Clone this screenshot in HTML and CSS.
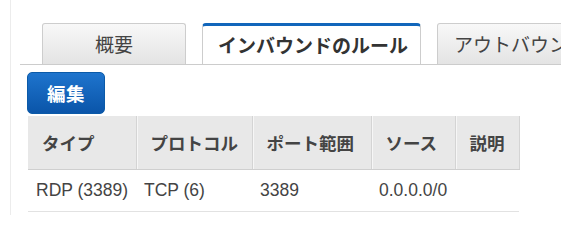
FILE: index.html
```html
<!DOCTYPE html>
<html lang="ja">
<head>
<meta charset="utf-8">
<link rel="stylesheet" href="styles.css">
</head>
<body>
<div class="frame">
  <div class="tabs">
    <div class="tab tab-first">概要</div>
    <div class="tab tab-active">インバウンドのルール</div>
    <div class="tab tab-last">アウトバウンドのルール</div>
  </div>
  <div class="toolbar">
    <button class="btn">編集</button>
  </div>
  <table class="rules">
    <colgroup>
      <col class="c1"><col class="c2"><col class="c3"><col class="c4"><col class="c5">
    </colgroup>
    <thead>
      <tr><th>タイプ</th><th>プロトコル</th><th>ポート範囲</th><th>ソース</th><th>説明</th></tr>
    </thead>
    <tbody>
      <tr><td>RDP (3389)</td><td>TCP (6)</td><td>3389</td><td>0.0.0.0/0</td><td></td></tr>
    </tbody>
  </table>
</div>
</body>
</html>
```

FILE: styles.css
```css
html, body {
  margin: 0;
  padding: 0;
  background: #fff;
}
body {
  font-family: "Liberation Sans", "Noto Sans CJK JP", sans-serif;
  color: #444;
  width: 561px;
  height: 215px;
  overflow: hidden;
}
.frame {
  margin-left: 10px;
  border-left: 1px solid #ececec;
  height: 215px;
  padding-top: 23px;
  box-sizing: border-box;
}
.tabs {
  display: flex;
  gap: 16px;
  margin-left: 9px;
  padding-left: 22px;
  border-bottom: 1px solid #cccccc;
  height: 41px;
  white-space: nowrap;
  overflow: hidden;
}
.tab {
  box-sizing: border-box;
  height: 41px;
  border: 1px solid #cdcdcd;
  border-bottom: none;
  border-radius: 3px 3px 0 0;
  background: linear-gradient(#f8f8f8, #e4e4e4);
  font-family: "Noto Sans CJK JP", sans-serif;
  font-size: 19px;
  line-height: 39px;
  color: #444;
  padding: 0 16px;
  flex: none;
}
.tab-first {
  width: 144px;
  text-align: center;
}
.tab-active {
  width: 219px;
  background: #fff;
  border-top: 3px solid #1166bb;
  line-height: 37px;
  font-weight: bold;
  color: #333;
  height: 42px;
  border-radius: 4px 4px 0 0;
  padding: 0 0 0 15px;
}
.tab-last {
  padding-left: 16px;
}
.toolbar {
  padding: 7px 0 0 16px;
}
.btn {
  display: block;
  width: 78px;
  height: 42px;
  border: 1px solid #0b5aa8;
  border-radius: 5px;
  background: linear-gradient(#1e74cd, #0a55a9);
  color: #fff;
  font-family: "Noto Sans CJK JP", sans-serif;
  font-weight: bold;
  font-size: 18.5px;
  line-height: 38px;
  padding: 0;
  letter-spacing: 0.5px;
}
.rules {
  margin: 2px 0 0 17px;
  border-collapse: collapse;
  table-layout: fixed;
  width: 491px;
}
.c1 { width: 108px; }
.c2 { width: 116px; }
.c3 { width: 119px; }
.c4 { width: 84px; }
.c5 { width: 64px; }
.rules th {
  background: #e8e8e8;
  height: 53px;
  padding: 0 0 0 14px;
  text-align: left;
  font-family: "Noto Sans CJK JP", sans-serif;
  font-size: 17.5px;
  font-weight: bold;
  color: #444;
  border-bottom: 1px solid #cfcfcf;
  border-right: 1px solid #d4d4d4;
  box-shadow: inset 1px 0 0 #f6f6f6;
  white-space: nowrap;
}
.rules th:first-child {
  box-shadow: none;
}
.rules td {
  height: 41px;
  padding: 0 0 0 8px;
  font-size: 17.5px;
  color: #444;
  border-bottom: 1px solid #e2e2e2;
  white-space: nowrap;
}
```
